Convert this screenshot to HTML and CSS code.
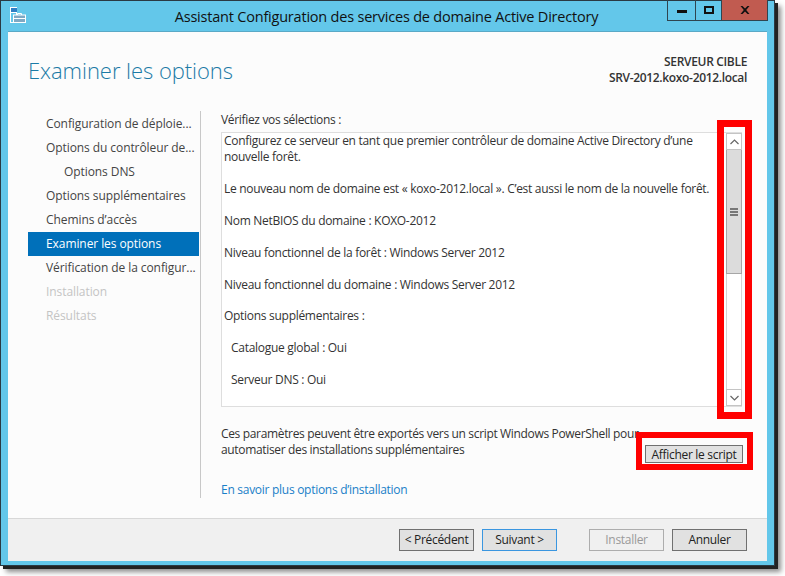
FILE: index.html
```html
<!DOCTYPE html>
<html lang="fr">
<head>
<meta charset="utf-8">
<title>Assistant Configuration des services de domaine Active Directory</title>
<link rel="stylesheet" href="styles.css">
</head>
<body>
<div class="window">
  <header class="titlebar">
    <svg class="appicon" width="16" height="16" viewBox="0 0 16 16" fill="none">
      <rect x=".5" y=".5" width="6" height="15" fill="#63c7ea" stroke="#fff"/>
      <rect x="1" y="1" width="6" height="4" fill="#2f7fc4"/>
      <path d="M.5 5.500h6.500" stroke="#fff"/>
      <rect x="3.500" y="8" width="12" height="7.500" fill="#7fa9c4" stroke="#fff"/>
      <path d="M7.500 8V6.500h4V8M3.500 11.500h12" stroke="#fff"/>
    </svg>
    <div class="title">Assistant Configuration des services de domaine Active Directory</div>
    <div class="controls">
      <div class="ctl ctl-min"><span class="glyph-min"></span></div>
      <div class="ctl ctl-max"><span class="glyph-max"></span></div>
      <div class="ctl ctl-close"><svg width="10" height="8" viewBox="0 0 10 8"><path d="M.5 0H2.500L5 2.500 7.500 0h2L6.200 4 9.500 8h-2L5 5.500 2.500 8h-2L3.800 4z" fill="#111"/></svg></div>
    </div>
  </header>
  <div class="client">
    <div class="content">
      <div class="head">
        <h1 class="pagetitle">Examiner les options</h1>
        <div class="target">
          <div>SERVEUR CIBLE</div>
          <div>SRV-2012.koxo-2012.local</div>
        </div>
      </div>
      <div class="main">
        <nav class="steps">
          <div class="step">Configuration de déploie...</div>
          <div class="step">Options du contrôleur de...</div>
          <div class="step sub">Options DNS</div>
          <div class="step">Options supplémentaires</div>
          <div class="step">Chemins d’accès</div>
          <div class="step active">Examiner les options</div>
          <div class="step">Vérification de la configur...</div>
          <div class="step off">Installation</div>
          <div class="step off">Résultats</div>
        </nav>
        <section class="pane">
          <div class="lead">Vérifiez vos sélections :</div>
          <div class="review">
            <div class="review-text">
              <p class="line">Configurez ce serveur en tant que premier contrôleur de domaine Active Directory d’une nouvelle forêt.</p>
              <p class="line">Le nouveau nom de domaine est « koxo-2012.local ». C’est aussi le nom de la nouvelle forêt.</p>
              <p class="line">Nom NetBIOS du domaine : KOXO-2012</p>
              <p class="line">Niveau fonctionnel de la forêt : Windows Server 2012</p>
              <p class="line">Niveau fonctionnel du domaine : Windows Server 2012</p>
              <p class="line">Options supplémentaires :</p>
              <p class="line ind">Catalogue global : Oui</p>
              <p class="line ind">Serveur DNS : Oui</p>
            </div>
            <div class="scrollbar">
              <div class="sb-btn"><svg width="9" height="6" viewBox="0 0 9 6"><path d="M.5 5L4.500 1l4 4" fill="none" stroke="#666" stroke-width="1.200"/></svg></div>
              <div class="sb-thumb"><span class="grip"></span></div>
              <div class="sb-track"></div>
              <div class="sb-btn"><svg width="9" height="6" viewBox="0 0 9 6"><path d="M.5 1l4 4 4-4" fill="none" stroke="#666" stroke-width="1.200"/></svg></div>
            </div>
          </div>
          <div class="export">
            <p class="export-text">Ces paramètres peuvent être exportés vers un script Windows PowerShell pour automatiser des installations supplémentaires</p>
            <button class="btn btn-script">Afficher le script</button>
          </div>
          <a class="more">En savoir plus options d’installation</a>
        </section>
      </div>
    </div>
    <footer class="footer">
      <button class="btn">&lt; Précédent</button>
      <button class="btn btn-default">Suivant &gt;</button>
      <button class="btn btn-off">Installer</button>
      <button class="btn">Annuler</button>
    </footer>
  </div>
  <div class="mark mark-scroll"></div>
  <div class="mark mark-script"></div>
</div>
</body>
</html>
```
FILE: styles.css
```css
* { box-sizing: border-box; }
html, body { margin: 0; padding: 0; background: #fff; }
body { width: 785px; height: 576px; overflow: hidden; font-family: "Open Sans", "Liberation Sans", sans-serif; font-size: 12px; color: #333; }
.window { position: relative; width: 775px; height: 566px; background: #63c7ea; border: 1px solid #2a3a44; display: flex; flex-direction: column; box-shadow: 3px 3px 0 #222, 6px 6px 5px rgba(0,0,0,.45); }
.titlebar { height: 30px; display: flex; position: relative; padding-left: 9px; flex: none; }
.appicon { margin-top: 6px; }
.title { position: absolute; left: 0; right: 0; top: 6px; text-align: center; font-size: 14.500px; line-height: 20px; color: #111; letter-spacing: -.21px; padding-right: 2px; }
.controls { margin-left: auto; display: flex; height: 21px; margin-top: -1px; margin-right: 6px; position: relative; border: 1px solid #2f4550; border-top: none; }
.ctl { display: flex; align-items: center; justify-content: center; }
.ctl-min { width: 28px; border-right: 1px solid #2f4550; }
.ctl-max { width: 26px; border-right: 1px solid #2f4550; }
.ctl-close { width: 45px; background: #c15b50; }
.glyph-min { display: block; width: 10px; height: 3px; background: #111; margin-top: 3px; }
.glyph-max { display: block; width: 10px; height: 8px; border: 2px solid #111; }
.client { flex: 1; margin: 0 7px 6px; background: #fcfcfc; display: flex; flex-direction: column; border-top: 1px solid #5aa9c6; }
.content { flex: 1; padding: 0 20px; display: flex; flex-direction: column; min-height: 0; }
.head { height: 80px; display: flex; justify-content: space-between; flex: none; }
.pagetitle { margin: 0; padding-top: 22px; font-weight: 300; font-size: 22px; line-height: 32px; color: #1b7aa6; letter-spacing: -.05px; }
.target { padding-top: 22px; text-align: right; line-height: 16px; color: #333; letter-spacing: -.33px; font-weight: 600; font-size: 12px; }
.main { display: flex; flex: 1; min-height: 0; padding-bottom: 20px; }
.steps { width: 171px; flex: none; }
.step { height: 24px; line-height: 24px; padding-left: 18px; white-space: nowrap; color: #444; letter-spacing: -.08px; }
.step.sub { padding-left: 36px; }
.step.active { background: #0070ba; color: #fff; }
.step.off { color: #c4c4c4; }
.pane { flex: 1; margin-left: 1px; margin-top: -1px; border-left: 1px solid #c8c8c8; padding-left: 20px; display: flex; flex-direction: column; min-height: 0; }
.lead { height: 21px; padding-top: 1px; line-height: 16px; letter-spacing: -.33px; }
.review { width: 521px; height: 275px; display: flex; background: #fff; border: solid #dedede; border-width: 1px 0 1px 1px; flex: none; }
.review-text { flex: 1; padding-left: 2px; letter-spacing: -.29px; line-height: 16px; }
.line { margin: 0 0 15.900px; width: 490px; }
.ind { padding-left: 7px; }
.scrollbar { width: 16px; display: flex; flex-direction: column; }
.sb-btn { height: 17px; border: 1px solid #c4c4c4; display: flex; align-items: center; justify-content: center; flex: none; }
.sb-thumb { height: 124px; background: #dcdcdc; border: solid #a6a6a6; border-width: 0 1px 1px; display: flex; align-items: center; justify-content: center; flex: none; }
.grip { display: block; width: 8px; height: 8px; background: repeating-linear-gradient(#777 0, #777 2px, transparent 2px, transparent 3px); }
.sb-track { flex: 1; border: solid #d4d4d4; border-width: 0 1px; }
.export { position: relative; margin-top: 19px; height: 56px; flex: none; }
.export-text { margin: 0; width: 420px; line-height: 16px; letter-spacing: -.34px; }
.btn { font-family: inherit; font-size: 12px; color: #222; background: #e1e1e1; border: 1px solid #707070; border-radius: 0; width: 75px; height: 22px; padding: 0; letter-spacing: -.3px; line-height: 18px; }
.btn-script { position: absolute; left: 424px; top: 19px; width: 98px; height: 18px; line-height: 14px; padding-top: 1px; }
.more { color: #1a7fc8; line-height: 16px; letter-spacing: -.28px; }
.footer { height: 43px; flex: none; background: #f0f0f0; border-top: 1px solid #d8d8d8; display: flex; align-items: flex-start; justify-content: flex-end; padding: 10px 20px 0 0; gap: 8px; }
.btn-default { border-color: #3a96e0; }
.btn-off { margin-left: 24px; background: #f0f0f0; border-color: #adadad; color: #9a9a9a; }
.mark { position: absolute; border: 7px solid #f00; }
.mark-scroll { left: 716px; top: 119px; width: 35px; height: 299px; }
.mark-script { left: 635px; top: 431px; width: 117px; height: 38px; border-width: 6px; }
```
